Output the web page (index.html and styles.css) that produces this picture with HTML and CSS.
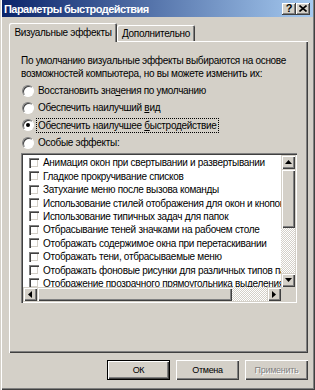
FILE: index.html
```html
<!DOCTYPE html>
<html lang="ru">
<head>
<meta charset="utf-8">
<title>Параметры быстродействия</title>
<link rel="stylesheet" href="styles.css">
</head>
<body>
<div class="window">
  <div class="titlebar">
    <span class="title">Параметры быстродействия</span>
    <div class="tb-buttons">
      <div class="tb-btn tb-help">?</div>
      <div class="tb-btn">
        <svg width="8" height="7" viewBox="0 0 8 7"><path d="M0.5 0.5 L7.5 6.5 M7.5 0.5 L0.5 6.5" stroke="#000" stroke-width="1.6" fill="none"/></svg>
      </div>
    </div>
  </div>
  <div class="content">
    <div class="tabs">
      <div class="tab active">Визуальные эффекты</div>
      <div class="tab">Дополнительно</div>
    </div>
    <div class="panel">
      <p class="intro">По умолчанию визуальные эффекты выбираются на основе<br>возможностей компьютера, но вы можете изменить их:</p>
      <div class="radios">
        <div class="radio-row"><span class="radio"></span><span class="label">Восстановить зна<u>ч</u>ения по умолчанию</span></div>
        <div class="radio-row"><span class="radio"></span><span class="label">Обеспечить наилучший <u>в</u>ид</span></div>
        <div class="radio-row"><span class="radio checked"></span><span class="label focus">Обеспечить наилучшее <u>б</u>ыстродействие</span></div>
        <div class="radio-row"><span class="radio"></span><span class="label">Особые эффекты:</span></div>
      </div>
      <div class="listbox">
        <div class="lb-top">
          <div class="items">
            <div class="item"><span class="check"></span>Анимация окон при свертывании и развертывании</div>
            <div class="item"><span class="check"></span>Гладкое прокручивание списков</div>
            <div class="item"><span class="check"></span>Затухание меню после вызова команды</div>
            <div class="item"><span class="check"></span>Использование стилей отображения для окон и кнопок</div>
            <div class="item"><span class="check"></span>Использование типичных задач для папок</div>
            <div class="item"><span class="check"></span>Отбрасывание теней значками на рабочем столе</div>
            <div class="item"><span class="check"></span>Отображать содержимое окна при перетаскивании</div>
            <div class="item"><span class="check"></span>Отображать тени, отбрасываемые меню</div>
            <div class="item"><span class="check"></span>Отображать фоновые рисунки для различных типов папок</div>
            <div class="item"><span class="check"></span>Отображение прозрачного прямоугольника выделения</div>
            <div class="item"><span class="check"></span>Отображение тени под указателем мыши</div>
          </div>
          <div class="vscroll">
            <div class="sbtn"><svg width="7" height="4" viewBox="0 0 7 4"><path d="M3.5 0 L7 4 L0 4 Z" fill="#000"/></svg></div>
            <div class="thumb v-thumb"></div>
            <div class="track"></div>
            <div class="sbtn"><svg width="7" height="4" viewBox="0 0 7 4"><path d="M0 0 L7 0 L3.5 4 Z" fill="#000"/></svg></div>
          </div>
        </div>
        <div class="lb-bottom">
          <div class="hscroll">
            <div class="sbtn"><svg width="4" height="7" viewBox="0 0 4 7"><path d="M4 0 L4 7 L0 3.5 Z" fill="#000"/></svg></div>
            <div class="thumb h-thumb"></div>
            <div class="track"></div>
            <div class="sbtn"><svg width="4" height="7" viewBox="0 0 4 7"><path d="M0 0 L4 3.5 L0 7 Z" fill="#000"/></svg></div>
          </div>
          <div class="corner"></div>
        </div>
      </div>
    </div>
    <div class="buttons">
      <div class="btn default">ОК</div>
      <div class="btn">Отмена</div>
      <div class="btn disabled">Применить</div>
    </div>
  </div>
</div>
</body>
</html>
```
FILE: styles.css
```css
* { box-sizing: border-box; }
body {
  margin: 0;
  width: 315px;
  height: 390px;
  overflow: hidden;
  background: #d4d0c8;
  font-family: "Liberation Sans", Arial, sans-serif;
  font-size: 10px;
  letter-spacing: -0.3px;
  color: #000;
}
.window {
  width: 315px;
  height: 390px;
  background: #d4d0c8;
  padding: 0 2px 2px 2px;
  box-shadow: inset 1px 0 #d4d0c8, inset 2px 0 #fff, inset -1px -1px #404040, inset -2px -2px #808080;
  display: flex;
  flex-direction: column;
}
.titlebar {
  height: 17px;
  flex-shrink: 0;
  background: linear-gradient(to right, #0a246a, #a6caf0);
  display: flex;
  align-items: center;
  padding: 0 3px 0 2px;
}
.title {
  flex: 1;
  color: #fff;
  font-weight: bold;
  font-size: 11px;
  letter-spacing: -0.55px;
  white-space: nowrap;
}
.tb-buttons { display: flex; }
.tb-btn {
  width: 14px;
  height: 12px;
  background: #d4d0c8;
  box-shadow: inset -1px -1px #404040, inset 1px 1px #fff, inset -2px -2px #808080;
  display: flex;
  align-items: center;
  justify-content: center;
  padding-bottom: 1px;
  letter-spacing: 0;
}
.tb-help { font-weight: bold; font-size: 11px; line-height: 1; }
.content {
  flex: 1;
  display: flex;
  flex-direction: column;
  padding: 6px 5px 0 7px;
}
.tabs {
  display: flex;
  align-items: flex-end;
  height: 18px;
}
.tab {
  height: 16px;
  width: 78px;
  display: flex;
  align-items: center;
  justify-content: center;
  background: #d4d0c8;
  border-radius: 2px 2px 0 0;
  box-shadow: inset 1px 1px #fff, inset -1px 0 #404040, inset -2px 0 #808080;
  white-space: nowrap;
}
.tab.active {
  width: 108px;
  height: 19px;
  margin-bottom: -1px;
  position: relative;
  z-index: 1;
  padding-bottom: 1px;
}
.panel {
  height: 312px;
  padding: 13px 11px 0 12px;
  box-shadow: inset 1px 1px #fff, inset -1px -1px #404040, inset -2px -2px #808080;
}
.intro {
  margin: 0;
  line-height: 13px;
  white-space: nowrap;
}
.radios { margin-top: 2px; }
.radio-row {
  height: 17.3px;
  display: flex;
  align-items: center;
  gap: 4px;
  padding-left: 1px;
}
.radio {
  width: 12px;
  height: 12px;
  flex-shrink: 0;
  border-radius: 50%;
  background: #fff;
  border: 1px solid;
  border-color: #808080 #fff #fff #808080;
  box-shadow: inset 1px 1px #404040;
  display: flex;
  align-items: center;
  justify-content: center;
}
.radio.checked::after {
  content: "";
  width: 4px;
  height: 4px;
  border-radius: 50%;
  background: #000;
}
.label { white-space: nowrap; line-height: 13px; }
.label.focus { outline: 1px dotted #000; padding: 0 1px; margin-left: -1px; }
.listbox {
  margin-top: 2px;
  width: 276px;
  height: 150px;
  padding: 2px;
  background: #fff;
  box-shadow: inset 1px 1px #808080, inset 2px 2px #404040, inset -1px -1px #fff, inset -2px -2px #d4d0c8;
  display: flex;
  flex-direction: column;
}
.lb-top {
  display: flex;
  height: 132px;
}
.items {
  flex: 1;
  overflow: hidden;
  padding-top: 1px;
}
.item {
  height: 13.4px;
  display: flex;
  align-items: center;
  gap: 4px;
  padding-left: 6px;
  white-space: nowrap;
}
.check {
  width: 10px;
  height: 10px;
  flex-shrink: 0;
  background: #fff;
  box-shadow: inset 1px 1px #808080, inset 2px 2px #404040, inset -1px -1px #fff, inset -2px -2px #d4d0c8;
}
.vscroll {
  width: 14px;
  display: flex;
  flex-direction: column;
}
.lb-bottom {
  display: flex;
  height: 14px;
}
.hscroll {
  flex: 1;
  display: flex;
}
.corner { width: 14px; background: #d4d0c8; }
.sbtn {
  width: 14px;
  height: 14px;
  flex-shrink: 0;
  background: #d4d0c8;
  box-shadow: inset 1px 1px #d4d0c8, inset 2px 2px #fff, inset -1px -1px #404040, inset -2px -2px #808080;
  display: flex;
  align-items: center;
  justify-content: center;
}
.thumb {
  background: #d4d0c8;
  box-shadow: inset 1px 1px #d4d0c8, inset 2px 2px #fff, inset -1px -1px #404040, inset -2px -2px #808080;
  flex-shrink: 0;
}
.v-thumb { height: 59px; }
.h-thumb { width: 195px; }
.track {
  flex: 1;
  background: repeating-conic-gradient(#fff 0 25%, #d4d0c8 0 50%) 0 0 / 2px 2px;
}
.buttons {
  display: flex;
  justify-content: flex-end;
  gap: 6px;
  margin-top: 7px;
}
.btn {
  width: 63px;
  height: 20px;
  display: flex;
  align-items: center;
  justify-content: center;
  background: #d4d0c8;
  box-shadow: inset 1px 1px #fff, inset -1px -1px #404040, inset -2px -2px #808080;
  font-size: 9px;
}
.btn.default {
  border: 1px solid #000;
}
.btn.disabled {
  color: #808080;
  text-shadow: 1px 1px #fff;
}
```
